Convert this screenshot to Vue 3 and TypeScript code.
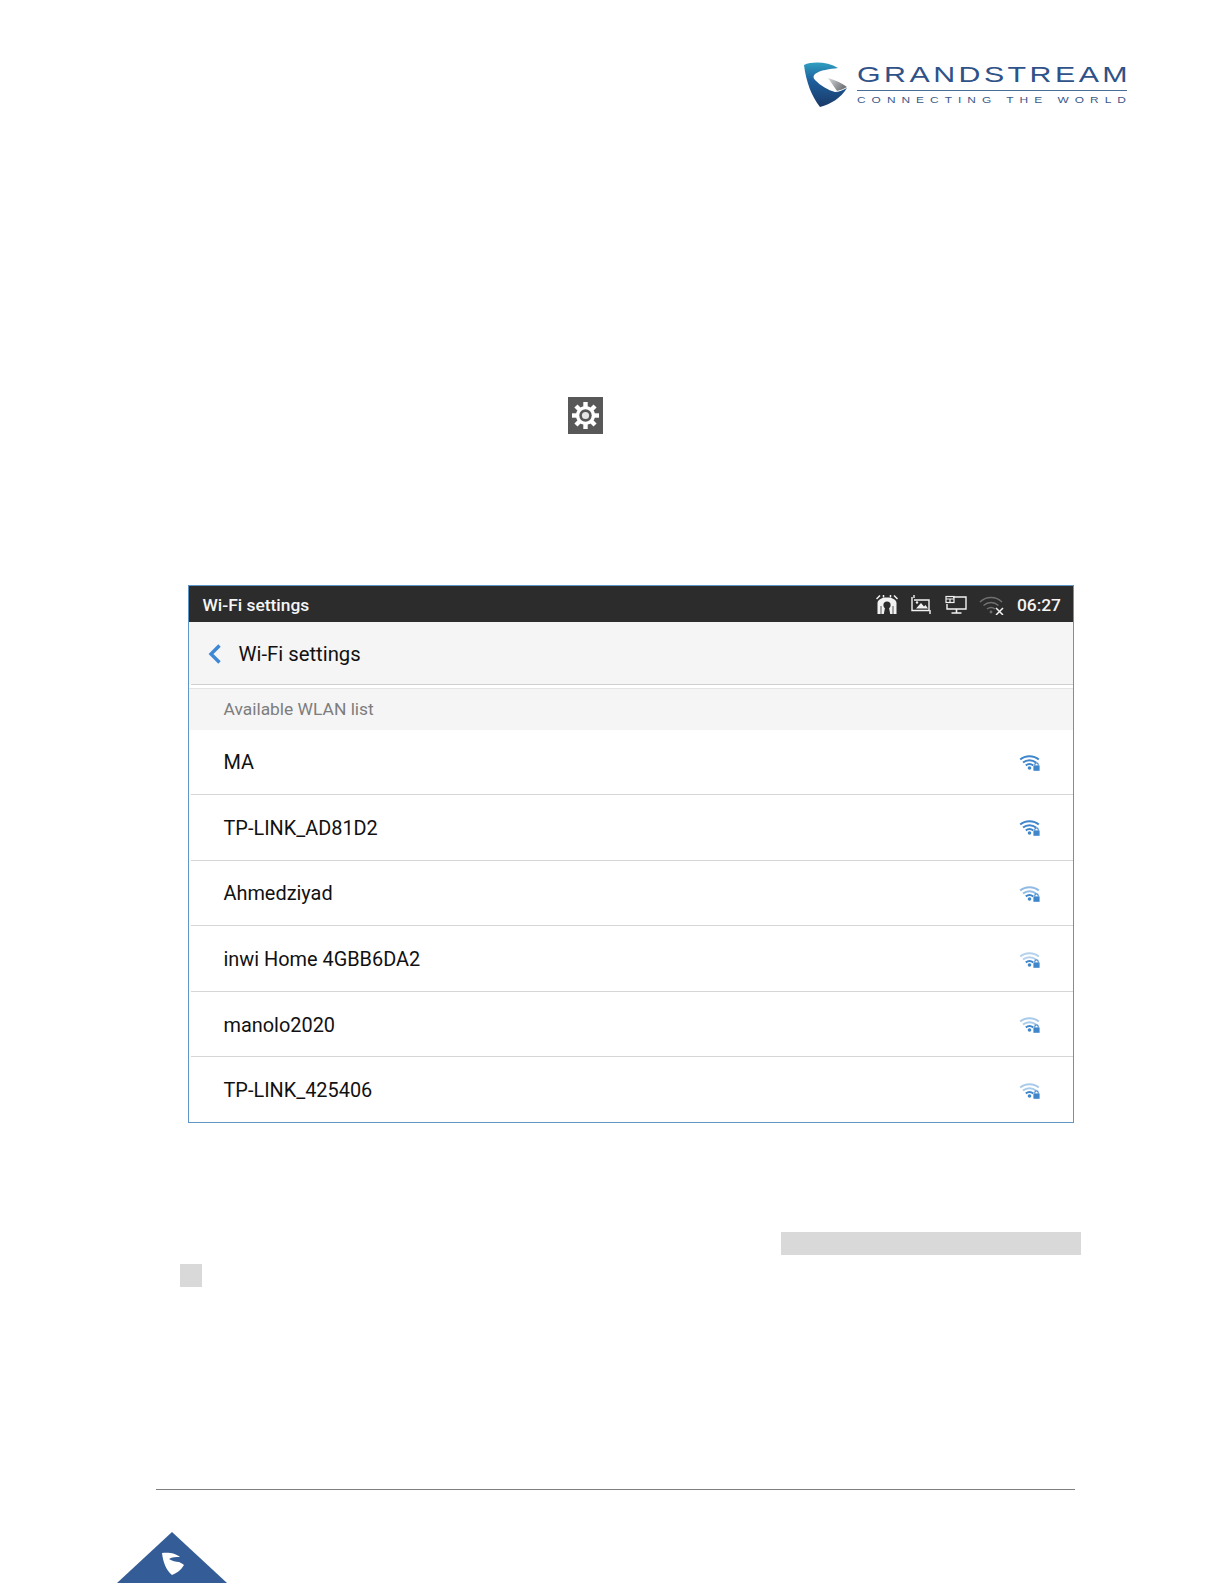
<script setup lang="ts">
interface Net { name: string; level: number; light: string }
const nets: Net[] = [
  { name: 'MA', level: 4, light: '#3f86cb' },
  { name: 'TP-LINK_AD81D2', level: 4, light: '#3f86cb' },
  { name: 'Ahmedziyad', level: 2, light: '#8fbbe4' },
  { name: 'inwi Home 4GBB6DA2', level: 2, light: '#b4d2ee' },
  { name: 'manolo2020', level: 2, light: '#a9cbea' },
  { name: 'TP-LINK_425406', level: 2, light: '#a9cbea' },
]
const arcs = [
  'M1.2 5.6C6.2 1 14.8 1 19.8 5.6',
  'M4 8.6C7.8 5.4 13.2 5.4 17 8.6',
  'M6.8 11.4C9.2 9.6 11.8 9.6 14.2 11.4',
]
function arcColor(i: number, n: Net): string {
  return 3 - i < n.level ? '#3f86cb' : n.light
}
const teeth = [0, 45, 90, 135, 180, 225, 270, 315]
</script>

<template>
  <div class="page">
    <header class="logo">
      <svg class="logo-mark" viewBox="0 0 46 46" width="46" height="46">
        <defs>
          <linearGradient id="lg1" x1="0" y1="0" x2="0" y2="1">
            <stop offset="0" stop-color="#2e9fc0" />
            <stop offset="0.4" stop-color="#1e5f9e" />
            <stop offset="1" stop-color="#1a3a66" />
          </linearGradient>
          <linearGradient id="lg2" x1="0" y1="0" x2="1" y2="0.5">
            <stop offset="0" stop-color="#d6d8da" />
            <stop offset="1" stop-color="#6f7276" />
          </linearGradient>
        </defs>
        <path d="M1 3C10 -1 25 0 35 6C27 7 17 8 12 12C10 14 10 16 12 18C18 24 25 28 32 30C36 30 40 28 44 26C38 36 28 42 17 45C9 35 3 20 1 3Z" fill="url(#lg1)" />
        <path d="M25 16C32 18 39 21 44 25C41 27 37 28 34 29C31 25 28 20 25 16Z" fill="url(#lg2)" />
      </svg>
      <div class="logo-text">
        <div class="brand"><span>GRANDSTREAM</span></div>
        <div class="logo-rule"></div>
        <div class="tag"><span>CONNECTING THE WORLD</span></div>
      </div>
    </header>

    <div class="gear">
      <svg viewBox="0 0 35 37" width="35" height="37">
        <rect width="35" height="37" fill="#585858" />
        <g transform="translate(17.5 18.5)">
          <rect v-for="a in teeth" :key="a" x="-2.2" y="-13.5" width="4.4" height="6" fill="#fff" :transform="`rotate(${a})`" />
          <circle r="9.6" fill="#fff" />
          <circle r="6.2" fill="#585858" />
          <circle r="3.6" fill="#e6e6e6" />
        </g>
      </svg>
    </div>

    <section class="shot">
      <div class="status">
        <span class="status-title">Wi-Fi settings</span>
        <div class="status-icons">
          <svg viewBox="0 0 22 20" width="22" height="20">
            <path d="M1.5 19V8C1.5 0.5 20.5 0.5 20.5 8V19Z" fill="#f2f2f2" />
            <path d="M0.5 4L4 0.5M21.5 4L18 0.5M7.5 0V2.5M14.5 0V2.5" stroke="#f2f2f2" stroke-width="1.5" />
            <circle cx="11" cy="10" r="3.6" fill="#2c2c2c" />
            <path d="M9.2 11.5H12.8L14.2 19H7.8Z" fill="#2c2c2c" />
            <path d="M5 19V11M17 19V11" stroke="#2c2c2c" stroke-width="0.8" />
          </svg>
          <svg viewBox="0 0 22 20" width="22" height="20">
            <path d="M2 2V15.5H19V5H4" fill="none" stroke="#f2f2f2" stroke-width="1.4" />
            <path d="M4 0V3M20 15V19" stroke="#f2f2f2" stroke-width="1.4" />
            <path d="M6 13.5L11 8L14 11.5L15.5 10L18 13.5Z" fill="#f2f2f2" />
            <circle cx="7" cy="7.5" r="1.2" fill="#f2f2f2" />
          </svg>
          <svg viewBox="0 0 22 20" width="22" height="20">
            <path d="M8 2H21V14H2V9" fill="none" stroke="#f2f2f2" stroke-width="1.4" />
            <path d="M11.5 14V17.5M6.5 18H16.5" stroke="#f2f2f2" stroke-width="1.6" />
            <rect x="1" y="1.5" width="8" height="6" fill="none" stroke="#f2f2f2" stroke-width="1.2" />
            <path d="M1 4H9M5 4V7" stroke="#f2f2f2" stroke-width="1.2" />
          </svg>
          <svg viewBox="0 0 26 20" width="26" height="20">
            <path d="M1 7C7 1 17 1 23 7M4.5 10.5C9 6.5 15 6.5 19.5 10.5M8 14C10.5 12 13.5 12 16 14" fill="none" stroke="#707070" stroke-width="1.5" />
            <circle cx="12" cy="17" r="1.4" fill="#707070" />
            <path d="M17 13L24 20M24 13L17 20" stroke="#f2f2f2" stroke-width="1.5" />
          </svg>
          <span class="clock">06:27</span>
        </div>
      </div>
      <div class="toolbar">
        <svg viewBox="0 0 14 20" width="14" height="20">
          <path d="M11.5 1.5L3 10L11.5 18.5" fill="none" stroke="#3d87d4" stroke-width="3.4" />
        </svg>
        <span class="toolbar-title">Wi-Fi settings</span>
      </div>
      <div class="toolbar-rule"></div>
      <div class="subhead">Available WLAN list</div>
      <ul class="list">
        <li v-for="n in nets" :key="n.name" class="row">
          <span>{{ n.name }}</span>
          <svg viewBox="0 0 22 18" width="22" height="18">
            <path v-for="(d, i) in arcs" :key="i" :d="d" fill="none" :stroke="arcColor(i, n)" stroke-width="2" />
            <circle cx="10.5" cy="14" r="1.8" fill="#3f86cb" />
            <path d="M15.8 11.5V10.4C15.8 8.4 19.2 8.4 19.2 10.4V11.5" fill="none" stroke="#3f86cb" stroke-width="1.1" />
            <rect x="14.4" y="11.4" width="6.2" height="5.4" fill="#3f86cb" />
          </svg>
        </li>
      </ul>
    </section>

    <div class="mark mark-long"></div>
    <div class="mark mark-short"></div>

    <footer class="foot">
      <div class="rule"></div>
      <svg class="tri" viewBox="0 0 110 51" width="110" height="51">
        <path d="M55 0L110 51H0Z" fill="#345d98" />
        <path d="M45 21C51 20 59 21 63 25C59 25 55 25 52 27C55 29 59 30 62 30C64 31 66 32 67 33C64 38 60 41 55 43C49 38 46 30 45 21Z" fill="#fff" />
      </svg>
    </footer>
  </div>
</template>

<style scoped>
.page {
  width: 1224px;
  height: 1584px;
  background: #fff;
  font-family: "Roboto", "Liberation Sans", sans-serif;
  overflow: hidden;
  display: flex;
  flex-direction: column;
}
.logo {
  display: flex;
  gap: 8px;
  margin: 62px 0 0 803px;
  height: 45px;
}
.logo-mark { display: block; flex: none; overflow: visible; }
.logo-text { width: 270px; padding-top: 2px; white-space: nowrap; }
.brand {
  font: 22px/21px "Liberation Sans", sans-serif;
  color: #2f5288;
  height: 22px;
}
.brand span {
  display: inline-block;
  letter-spacing: 2.5px;
  transform: scaleX(1.38);
  transform-origin: left center;
}
.logo-rule { height: 1px; background: #4a6c98; margin-top: 4px; }
.tag {
  font: 8.5px/10px "Liberation Sans", sans-serif;
  color: #3a5a88;
  margin-top: 4px;
}
.tag span {
  display: inline-block;
  letter-spacing: 4.3px;
  transform: scaleX(1.4);
  transform-origin: left center;
}
.gear {
  width: 35px;
  height: 37px;
  margin: 290px 0 0 568px;
}
.gear svg { display: block; }
.shot {
  width: 886px;
  height: 538px;
  margin: 151px 0 0 188px;
  box-sizing: border-box;
  border: 1.5px solid #5f96c4;
  display: flex;
  flex-direction: column;
  background: #fff;
}
.status {
  height: 35.5px;
  box-sizing: border-box;
  background: #2c2c2c;
  color: #f5f5f5;
  display: flex;
  align-items: center;
  justify-content: space-between;
  padding: 2px 12px 0 13.5px;
  font-size: 17.4px;
  font-weight: 500;
  flex: none;
}
.status-icons { display: flex; align-items: center; gap: 12.5px; }
.status-icons svg { display: block; }
.clock { margin-left: -1px; }
.toolbar {
  height: 62px;
  box-sizing: border-box;
  background: #f5f5f5;
  display: flex;
  align-items: center;
  gap: 17px;
  padding: 3px 0 0 18.5px;
  font-size: 20.3px;
  color: #111;
  flex: none;
}
.toolbar-rule { height: 1px; background: #cfcfcf; margin-left: 2px; flex: none; }
.subhead {
  height: 42px;
  margin-top: 3px;
  border-top: 1px solid #e4e4e4;
  box-sizing: border-box;
  background: #f5f5f5;
  display: flex;
  align-items: center;
  padding-left: 34.5px;
  font-size: 17.4px;
  color: #7d7d7d;
  flex: none;
}
.list { list-style: none; margin: 0; padding: 0; flex: 1; display: flex; flex-direction: column; }
.row {
  flex: 1;
  display: flex;
  align-items: center;
  justify-content: space-between;
  padding: 2px 32px 0 33px;
  margin-left: 1.5px;
  font-size: 19.9px;
  color: #111;
  border-bottom: 1px solid #d6d6d6;
}
.row:last-child { border-bottom: none; }
.mark { background: #d9d9d9; }
.mark-long { width: 300px; height: 23px; margin: 109px 0 0 781px; }
.mark-short { width: 22px; height: 23px; margin: 9px 0 0 180px; }
.foot { margin-top: 202px; display: flex; flex-direction: column; }
.rule { width: 919px; height: 1px; background: #7f7f7f; margin-left: 156px; }
.tri { display: block; margin: 42px 0 0 117px; }
</style>
